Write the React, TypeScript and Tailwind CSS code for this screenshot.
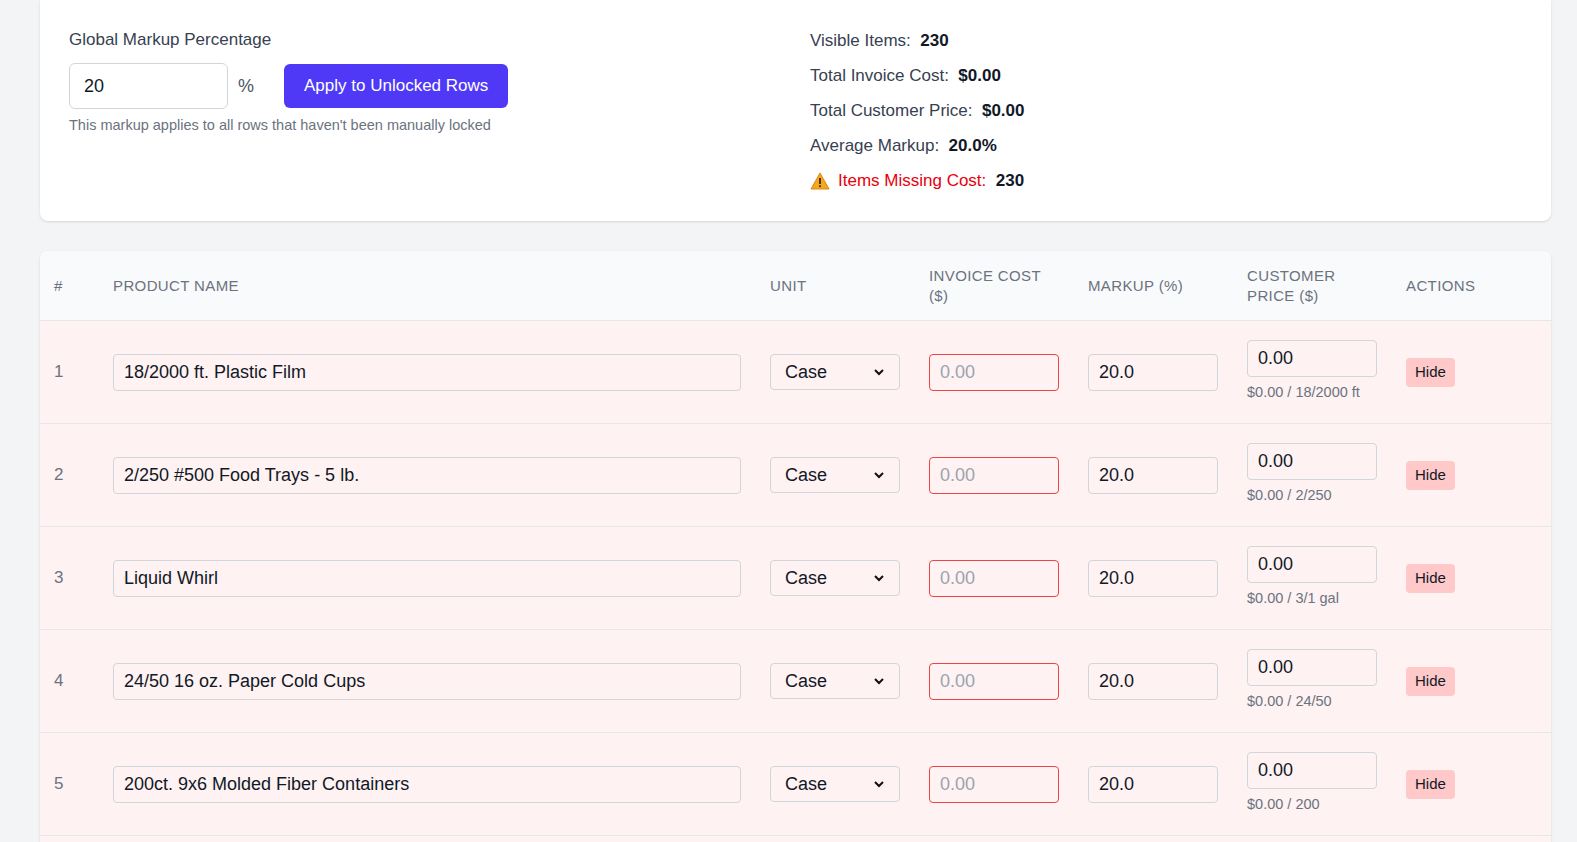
import React from "react";

const rows = [
  { n: 1, name: "18/2000 ft. Plastic Film", per: "18/2000 ft" },
  { n: 2, name: "2/250 #500 Food Trays - 5 lb.", per: "2/250" },
  { n: 3, name: "Liquid Whirl", per: "3/1 gal" },
  { n: 4, name: "24/50 16 oz. Paper Cold Cups", per: "24/50" },
  { n: 5, name: "200ct. 9x6 Molded Fiber Containers", per: "200" },
];

const grid = "grid grid-cols-[59px_657px_159px_159px_159px_159px_159px]";

export default function App() {
  return (
    <div className="h-[842px] overflow-hidden bg-[#f3f4f6] pl-[40px] font-[Liberation_Sans,Arial,sans-serif] text-[#111827]">
      <div className="w-[1511px] bg-white rounded-b-lg shadow-sm h-[221px] flex px-[29px] pt-[29px]">
        <div className="w-[741px]">
          <div className="text-[17px] leading-[22px] text-[#374151]">Global Markup Percentage</div>
          <div className="flex items-center mt-[12px]">
            <input
              defaultValue="20"
              className="w-[159px] h-[46px] border border-[#d1d5db] rounded-md px-[14px] text-[18px] outline-none"
            />
            <span className="ml-[10px] text-[18px] text-[#4b5563]">%</span>
            <button className="ml-[30px] h-[44px] px-[20px] rounded-md bg-[#4f39f6] text-white text-[17px]">
              Apply to Unlocked Rows
            </button>
          </div>
          <div className="mt-[6px] text-[14.5px] text-[#6b7280]">This markup applies to all rows that haven't been manually locked</div>
        </div>
        <div className="flex flex-col gap-[13px] text-[17px] leading-[22px] text-[#374151] pt-[1px]">
          <div>Visible Items: &nbsp;<b className="text-[#111827]">230</b></div>
          <div>Total Invoice Cost: &nbsp;<b className="text-[#111827]">$0.00</b></div>
          <div>Total Customer Price: &nbsp;<b className="text-[#111827]">$0.00</b></div>
          <div>Average Markup: &nbsp;<b className="text-[#111827]">20.0%</b></div>
          <div className="flex items-center">
            <svg width="20" height="18" viewBox="0 0 20 18" className="mr-[8px]">
              <path d="M10 1 L19 17 H1 Z" fill="#f5a623" stroke="#d98a0b" strokeWidth="1" strokeLinejoin="round" />
              <rect x="9.1" y="6" width="1.8" height="6" fill="#3a2a00" />
              <rect x="9.1" y="13.3" width="1.8" height="1.8" fill="#3a2a00" />
            </svg>
            <span className="text-[#e7000b]">Items Missing Cost:</span>&nbsp;&nbsp;<b className="text-[#111827]">230</b>
          </div>
        </div>
      </div>

      <div className="mt-[30px] w-[1511px] bg-white rounded-t-lg shadow-sm overflow-hidden">
        <div className={`${grid} h-[70px] items-center bg-[#f9fafb] border-b border-[#e5e7eb] text-[15px] text-[#6b7280] uppercase tracking-wide leading-[20px]`}>
          <div className="pl-[14px]">#</div>
          <div className="px-[14px]">Product Name</div>
          <div className="px-[14px]">Unit</div>
          <div className="px-[14px]">Invoice Cost<br />($)</div>
          <div className="px-[14px]">Markup (%)</div>
          <div className="px-[14px]">Customer<br />Price ($)</div>
          <div className="px-[14px]">Actions</div>
        </div>
        {rows.map((r) => (
          <div key={r.n} className={`${grid} h-[103px] items-center bg-[#fef2f2] border-b border-[#e5e7eb] text-[18px]`}>
            <div className="pl-[14px] text-[#6b7280] text-[17px]">{r.n}</div>
            <div className="pl-[14px] pr-[15px]">
              <input defaultValue={r.name} className="w-full h-[37px] border border-[#d1d5db] rounded bg-[#fef2f2] px-[10px] outline-none" />
            </div>
            <div className="px-[14px]">
              <div className="w-[130px] h-[36px] border border-[#d1d5db] rounded bg-[#fef2f2] flex items-center justify-between px-[14px]">
                <span>Case</span>
                <svg width="12" height="12" viewBox="0 0 12 12"><path d="M2 4 L6 8 L10 4" fill="none" stroke="#111" strokeWidth="2" /></svg>
              </div>
            </div>
            <div className="px-[14px]">
              <div className="w-[130px] h-[37px] border border-[#ef4444] rounded bg-[#fef2f2] flex items-center px-[10px] text-[#9ca3af]">0.00</div>
            </div>
            <div className="px-[14px]">
              <div className="w-[130px] h-[37px] border border-[#d1d5db] rounded bg-[#fef2f2] flex items-center px-[10px]">20.0</div>
            </div>
            <div className="px-[14px]">
              <div className="w-[130px] h-[37px] border border-[#d1d5db] rounded bg-[#fef2f2] flex items-center px-[10px]">0.00</div>
              <div className="text-[14.5px] text-[#6b7280] mt-[5px]">$0.00 / {r.per}</div>
            </div>
            <div className="px-[14px]">
              <span className="inline-flex items-center h-[29px] px-[9px] rounded bg-[#ffc9c9] text-[15px]">Hide</span>
            </div>
          </div>
        ))}
        <div className="h-[60px] bg-[#fef2f2]" />
      </div>
    </div>
  );
}
